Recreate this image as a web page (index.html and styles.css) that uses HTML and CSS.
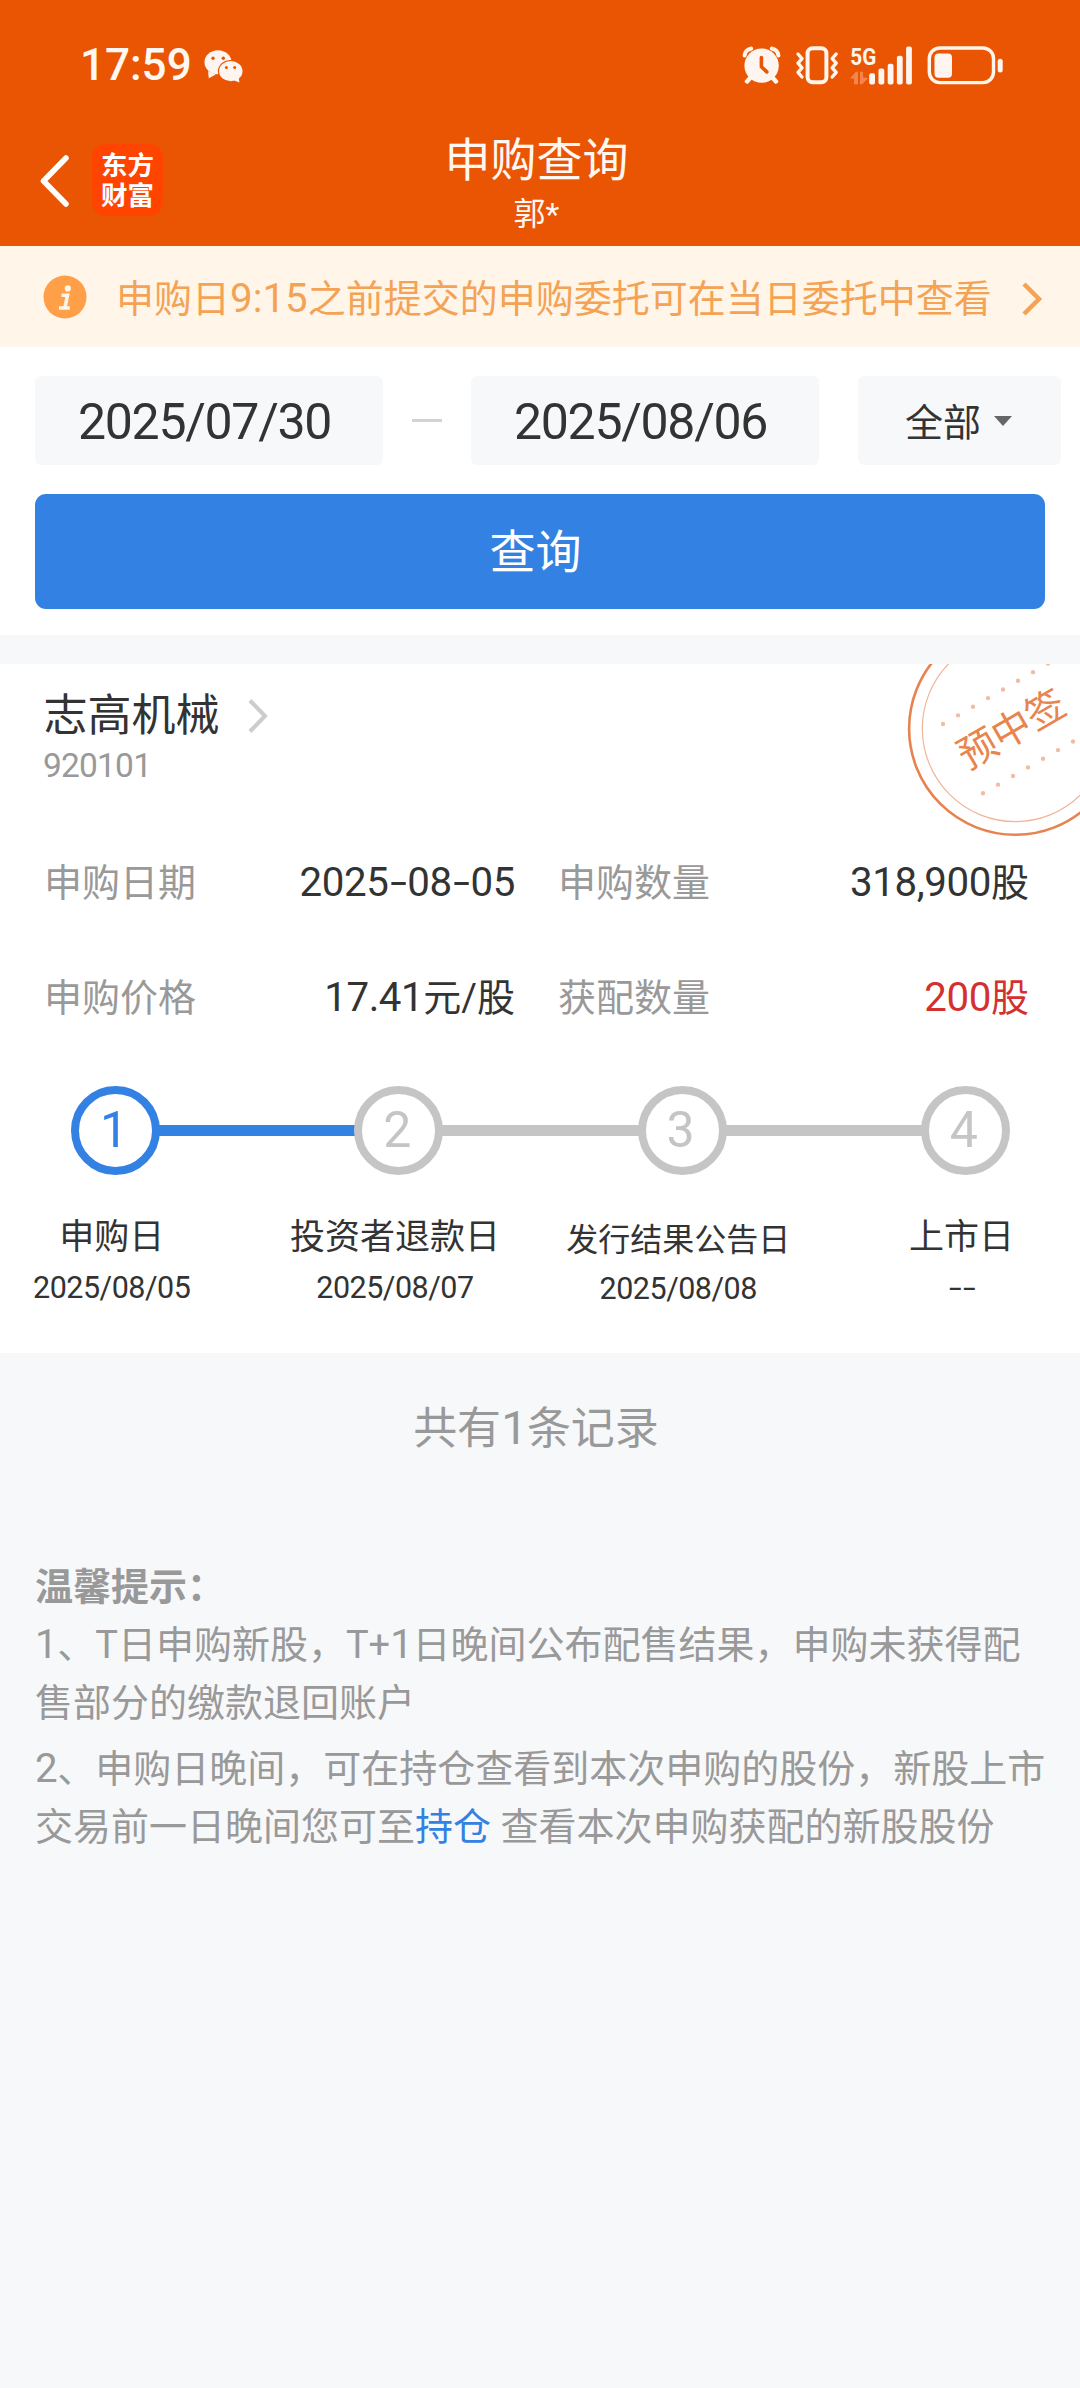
FILE: index.html
```html
<!DOCTYPE html>
<html lang="zh-CN">
<head>
<meta charset="utf-8">
<title>申购查询</title>
<link rel="stylesheet" href="styles.css">
</head>
<body>
<header class="header">
  <div class="status">
    <span class="clock">17:59</span>
    <svg class="wechat" width="40" height="34" viewBox="204 48 40 34">
      <path class="ico" d="M208 70l0.8 7.2 7-3.6z"/>
      <ellipse class="ico" cx="218" cy="61.2" rx="13.5" ry="12"/>
      <ellipse cx="230.8" cy="70.2" rx="12.9" ry="11.3" fill="#ea5504"/>
      <ellipse class="ico" cx="230.8" cy="70.2" rx="11.7" ry="10.1"/>
      <path class="ico" d="M233 79l6.4 2.6-0.6-4.8z"/>
      <g fill="#ea5504"><circle cx="213" cy="57.3" r="1.7"/><circle cx="223.3" cy="57.3" r="1.7"/><circle cx="226.4" cy="66.5" r="1.5"/><circle cx="234.7" cy="66.5" r="1.5"/></g>
    </svg>
    <svg class="indicators" width="270" height="50" viewBox="740 40 270 50">
      <g class="line" stroke-width="4">
        <path d="M744.6 54.5c0.4-3.5 3-6.2 6.6-7M778.4 54.5c-0.4-3.5-3-6.2-6.6-7"/>
        <path d="M751 76l-4 4.4M772 76l4 4.4" stroke-width="4.5"/>
      </g>
      <circle class="ico" cx="761.6" cy="64.6" r="17.2"/>
      <path d="M761.4 56.5v9.2l5.4 5.2" fill="none" stroke="#ea5504" stroke-width="3.6" stroke-linecap="round" stroke-linejoin="round"/>
      <rect class="line" x="807.6" y="47.3" width="18.8" height="34" rx="5" stroke-width="4"/>
      <path class="line" stroke-width="3.4" d="M798 53l4 4.6-4 4.6 4 4.6-4 4.6 4 4.600M836.200 53l-4 4.600 4 4.600-4 4.600 4 4.600-4 4.600"/>
      <text class="net" x="850.3" y="64.3" textLength="26" lengthAdjust="spacingAndGlyphs">5G</text>
      <path d="M850 77.500l6-6.800h2v12.600h-4v-5.800zM868 77.200l-6 6.100h-2v-12.600h3v5.500z" fill="#f6854d"/>
      <g class="ico">
        <rect x="869.2" y="72.300" width="5.800" height="11.200" rx="2"/>
        <rect x="878.500" y="67.500" width="5.800" height="16" rx="2"/>
        <rect x="887.700" y="62.700" width="5.800" height="20.800" rx="2"/>
        <rect x="896.900" y="54.700" width="5.800" height="28.800" rx="2"/>
        <rect x="906.100" y="45.400" width="5.800" height="38.100" rx="2"/>
        <rect x="934.500" y="52.500" width="17.500" height="24.200" rx="4"/>
        <rect x="997.700" y="57.700" width="5" height="13.800" rx="2.500"/>
      </g>
      <rect class="line" x="929.300" y="47" width="64.200" height="34.600" rx="10.500" stroke-width="3.400"/>
    </svg>
  </div>
  <nav class="nav">
    <div class="nav-left">
      <svg width="30" height="54" viewBox="0 0 30 54"><path d="M26 5L3.500 28L26 51" fill="none" stroke="#fff" stroke-width="5.500" stroke-linecap="round" stroke-linejoin="round"/></svg>
      <div class="logo"><span>东方</span><span>财富</span></div>
    </div>
    <div class="nav-title">
      <h1>申购查询</h1>
      <p>郭*</p>
    </div>
  </nav>
</header>

<div class="notice">
  <svg width="44" height="44" viewBox="0 0 44 44"><circle cx="22" cy="22" r="21.500" fill="#ff9f48"/><circle cx="24.800" cy="13.400" r="3.100" fill="#fff5e9"/><path d="M18.500 20.300h6l-2.600 12.600M16 33h10.800" fill="none" stroke="#fff5e9" stroke-width="3.600"/></svg>
  <p>申购日<span class="n">9:15</span>之前提交的申购委托可在当日委托中查看</p>
  <svg class="notice-arrow" width="22" height="36" viewBox="0 0 22 36"><path d="M3 3L18 18L3 33" fill="none" stroke="#f4a355" stroke-width="4.500"/></svg>
</div>

<section class="query">
  <div class="filters">
    <div class="date">2025/07/30</div>
    <i class="dash"></i>
    <div class="date">2025/08/06</div>
    <div class="select">全部<i class="caret"></i></div>
  </div>
  <button class="submit">查询</button>
</section>

<section class="card">
  <svg class="stamp" width="180" height="176" viewBox="900 664 180 176">
    <circle cx="1015.300" cy="728.600" r="106.200" fill="none" stroke="#e8824f" stroke-width="2.600"/>
    <circle cx="1015.300" cy="728.600" r="93" fill="none" stroke="#efb599" stroke-width="1.200"/>
    <g fill="none" stroke="#f0bda3" stroke-width="4.400" stroke-linecap="round" stroke-dasharray="0 17.310">
      <path d="M943 724L1048.400 663.300"/>
      <path d="M983 793.300L1088.400 732.600"/>
    </g>
    <text x="0" y="14.600" text-anchor="middle" transform="translate(1011 728.500) rotate(-30)">预中签</text>
  </svg>
  <div class="stock">
    <h2>志高机械</h2>
    <svg width="22" height="36" viewBox="0 0 22 36"><path d="M3 2.500L18 18L3 33.500" fill="none" stroke="#ccc" stroke-width="4"/></svg>
  </div>
  <p class="code">920101</p>
  <dl class="facts">
    <div><dt>申购日期</dt><dd><span class="n">2025<b class="hy">-</b>08<b class="hy">-</b>05</span></dd></div>
    <div><dt>申购数量</dt><dd><span class="n">318,900</span>股</dd></div>
    <div><dt>申购价格</dt><dd><span class="n">17.41</span>元/股</dd></div>
    <div><dt>获配数量</dt><dd class="red"><span class="n">200</span>股</dd></div>
  </dl>
  <div class="track">
    <span class="dot on">1</span><i class="bar on"></i>
    <span class="dot">2</span><i class="bar"></i>
    <span class="dot">3</span><i class="bar"></i>
    <span class="dot">4</span>
  </div>
  <ol class="steps">
    <li><strong>申购日</strong><span>2025/08/05</span></li>
    <li><strong>投资者退款日</strong><span>2025/08/07</span></li>
    <li><strong class="long">发行结果公告日</strong><span>2025/08/08</span></li>
    <li><strong>上市日</strong><span><b class="hy">-</b><b class="hy">-</b></span></li>
  </ol>
</section>

<p class="total">共有<span class="n">1</span>条记录</p>

<section class="tips">
  <h3>温馨提示：</h3>
  <p><span class="n">1</span>、T日申购新股，T+<span class="n">1</span>日晚间公布配售结果，申购未获得配<br>售部分的缴款退回账户</p>
  <p><span class="n">2</span>、申购日晚间，可在持仓查看到本次申购的股份，新股上市<br>交易前一日晚间您可至<a>持仓</a> 查看本次申购获配的新股股份</p>
</section>
</body>
</html>
```
FILE: styles.css
```css
* { box-sizing: border-box; margin: 0; padding: 0; }
html { background: #f7f8fa; }
body {
  width: 1080px;
  min-height: 2388px;
  background: #f7f8fa;
  color: #333;
  font: 400 38px/58px Roboto, "Noto Sans CJK SC", sans-serif;
  white-space: nowrap;
}
h1, h2, strong, b { font-weight: 400; }
svg { display: block; flex: none; }
.n { font-size: 1.06em; letter-spacing: -0.01em; }
.hy { display: inline-block; padding: 0 0.1em; transform: scaleX(1.5); }

/* header */
.header { height: 246px; background: #ea5504; color: #fff8f2; }
.status { height: 131px; display: flex; align-items: center; padding: 0 70px 0 80px; }
.clock { font-size: 44px; font-weight: 500; line-height: 131px; width: 124px; }
.ico { fill: #fff5f0; }
.line { fill: none; stroke: #fff5ea; stroke-linecap: round; stroke-linejoin: round; }
.indicators { margin-left: auto; }
.net { font: 700 24.500px Roboto, sans-serif; fill: #fff5ea; }
.nav { display: grid; grid-template-columns: 1fr auto 1fr; padding: 2px 7px 0 0; align-items: start; }
.nav-left { display: flex; align-items: center; gap: 22px; padding: 11px 0 0 40px; }
.logo {
  width: 71px; height: 72px; border-radius: 14px; background: #ff4400;
  display: flex; flex-direction: column; align-items: center; justify-content: center;
  font-size: 26.500px; font-weight: 700; line-height: 30px; color: #fff; padding-top: 2px;
}
.nav-title { text-align: center; }
.nav-title h1 { font-size: 46px; line-height: 54px; }
.nav-title p { font-size: 32px; line-height: 40px; margin-top: 7px; }

/* notice strip */
.notice { height: 101px; display: flex; align-items: center; padding: 0 37px 0 43px; background: #fff5e9; color: #f4a355; }
.notice p { margin: 5px 0 0 29px; }
.notice .n { letter-spacing: 0; }
.notice-arrow { margin: 4px 0 0 auto; }

/* query form */
.query { height: 288px; padding: 29px 19px 0 35px; background: #fff; }
.filters { display: flex; align-items: center; height: 89px; }
.date { width: 348px; height: 89px; border-radius: 6px; background: #f7f8fa; padding-left: 43px; font-size: 50px; line-height: 92px; letter-spacing: -1.300px; }
.dash { width: 30px; height: 3px; margin: 0 29px; background: #d0d4d9; }
.select { width: 203px; height: 89px; margin-left: auto; border-radius: 6px; background: #f7f8fa; display: flex; align-items: center; padding: 4px 0 0 47px; }
.caret { margin: -3px 0 0 13px; border: 9px solid transparent; border-top: 10.500px solid #666; border-bottom: 0; }
.submit {
  display: block; width: 1010px; height: 115px; margin-top: 29px; padding: 0 9px 0 0; border: 0; border-radius: 11px;
  background: #3381e3; color: #fff; font: 400 46px/117px Roboto, "Noto Sans CJK SC", sans-serif;
}

/* subscription card */
.card { position: relative; height: 689px; margin-top: 29px; padding-top: 27px; background: #fff; }
.stamp { position: absolute; top: 0; right: 0; }
.stamp text { font-size: 39px; fill: #e8854f; }
.stock { display: flex; align-items: center; gap: 27px; padding-left: 43.500px; height: 50px; }
.stock h2 { font-size: 44px; line-height: 50px; }
.code { padding-left: 43px; font-size: 33.500px; line-height: 48px; letter-spacing: -0.800px; color: #999; margin-top: 1px; }
.facts { display: grid; grid-template-columns: 471px 471px; column-gap: 43px; row-gap: 57px; padding: 64px 0 0 44px; }
.facts div { display: flex; justify-content: space-between; }
.facts dt { color: #999; }
.facts .red { color: #d43030; }
.track { display: flex; align-items: center; margin: 59px 0 0 71px; }
.dot {
  width: 89px; height: 89px; border: 8.500px solid #c5c5c5; border-radius: 50%;
  text-align: center; font-size: 50px; line-height: 73px; color: #c5c5c5; padding-right: 3px;
}
.bar { width: 196.300px; height: 11px; margin: 0 -1px; background: #c5c5c5; }
.dot.on { border-color: #3381e3; color: #3381e3; }
.bar.on { background: #3381e3; }
.steps { list-style: none; display: grid; grid-template-columns: repeat(4, 283.300px); margin: 38px 0 0 -30px; text-align: center; }
.steps li { display: flex; flex-direction: column; }
.steps strong { font-size: 35px; line-height: 50px; }
.steps .long { font-size: 32px; padding-top: 2px; margin-bottom: -1px; }
.steps span { font-size: 30.500px; line-height: 50px; letter-spacing: -0.500px; }

.total { padding: 45px 8px 0 0; text-align: center; font-size: 44px; line-height: 60px; color: #999; }

/* hints */
.tips { margin-top: 99px; padding-left: 35px; color: #999; }
.tips h3 { font-size: 38px; font-weight: 700; }
.tips p { margin-bottom: 8px; }
.tips a { color: #3381e3; }
```
